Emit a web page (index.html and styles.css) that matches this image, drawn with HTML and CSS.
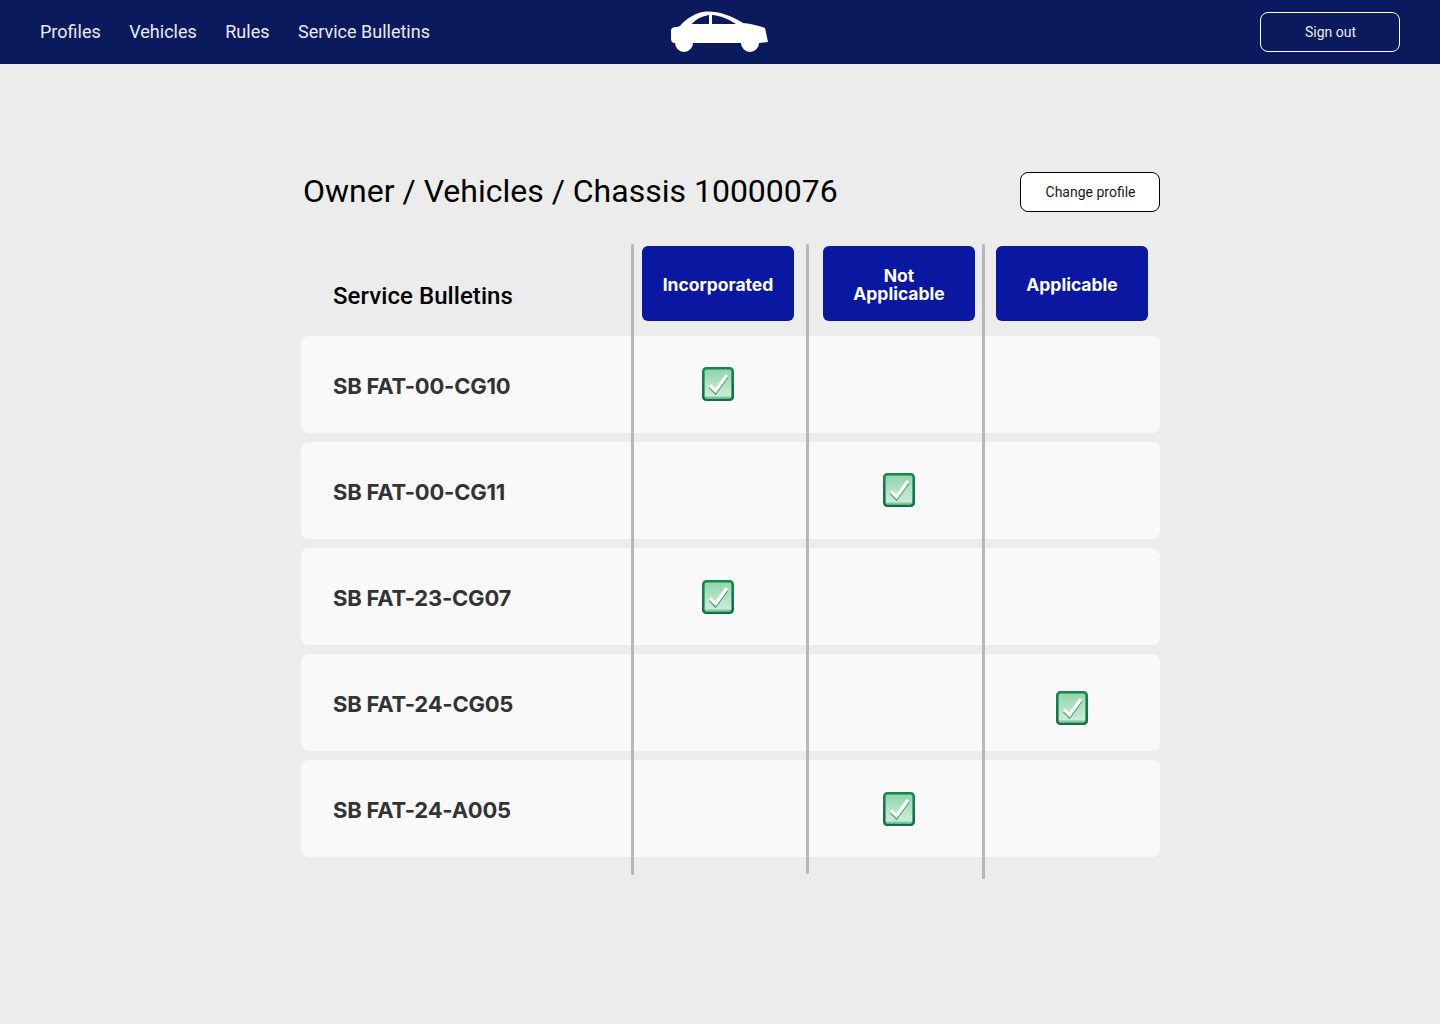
FILE: index.html
```html
<!DOCTYPE html>
<html lang="en">

<head>
  <meta charset="UTF-8">
  <meta name="viewport" content="width=device-width, initial-scale=1.0">
  <title>Service Bulletins</title>
  <link rel="stylesheet" href="styles.css">
</head>

<body>
  <svg class="defs" width="0" height="0" aria-hidden="true">
    <defs>
      <linearGradient id="check_fill" x1="0" y1="0" x2="0" y2="1">
        <stop offset="0" stop-color="#8ed4aa" />
        <stop offset="1" stop-color="#d3f0de" />
      </linearGradient>
      <linearGradient id="check_edge" x1="0" y1="0" x2="0" y2="1">
        <stop offset="0" stop-color="#1a8455" />
        <stop offset="1" stop-color="#0f6e43" />
      </linearGradient>
      <symbol id="check" viewBox="0 0 32 34">
        <rect x="1.300" y="1.300" width="29.400" height="31.400" rx="3" fill="url(#check_fill)" stroke="url(#check_edge)" stroke-width="2.600" />
        <rect x="3" y="29.500" width="26" height="1.500" fill="#7fc79c" />
        <path d="M8 18.500 L13.500 24.500 L25 8.500" fill="none" stroke="#3f9c6e" stroke-width="3.200" transform="translate(0 1.300)" />
        <path d="M8 18.500 L13.500 24 L25 8" fill="none" stroke="#fff" stroke-width="3.400" />
      </symbol>
    </defs>
  </svg>

  <nav class="topbar">
    <div class="topbar_links">
      <a href="#">Profiles</a>
      <a href="#">Vehicles</a>
      <a href="#">Rules</a>
      <a href="#">Service Bulletins</a>
    </div>

    <svg class="logo" viewBox="0 0 98 42" aria-label="Logo">
      <path fill="#fff" fill-rule="evenodd" d="M1 20 C1 17 3 16 7 16 L10 15 C16 8 26 0.500 38 0.500 C50 0.500 62 5 73 12 C82 13 90 15 95 17 L98 31 L89 32 A9 9 0 0 1 71 32 L23 32 A9 9 0 0 1 5 32 C2 32 1 30 1 27 Z M21.500 13 C26 8 32 5 39 4 L39 13 Z M42 4 C50 4.500 58 8 66 13 L42 13 Z" />
    </svg>

    <button class="btn btn_signout">Sign out</button>
  </nav>

  <main class="page">
    <div class="page_head">
      <h1>Owner / Vehicles / Chassis 10000076</h1>
      <button class="btn btn_change">Change profile</button>
    </div>

    <div class="board">
      <div class="board_head">
        <h2>Service Bulletins</h2>
        <div class="cell"><div class="status">Incorporated</div></div>
        <div class="cell"><div class="status">Not<br>Applicable</div></div>
        <div class="cell"><div class="status">Applicable</div></div>
      </div>

      <div class="row">
        <div class="row_name">SB FAT-00-CG10</div>
        <div class="cell"><svg class="tick"><use href="#check" /></svg></div>
        <div class="cell"></div>
        <div class="cell"></div>
      </div>

      <div class="row">
        <div class="row_name">SB FAT-00-CG11</div>
        <div class="cell"></div>
        <div class="cell"><svg class="tick"><use href="#check" /></svg></div>
        <div class="cell"></div>
      </div>

      <div class="row">
        <div class="row_name">SB FAT-23-CG07</div>
        <div class="cell"><svg class="tick tick_mid"><use href="#check" /></svg></div>
        <div class="cell"></div>
        <div class="cell"></div>
      </div>

      <div class="row">
        <div class="row_name">SB FAT-24-CG05</div>
        <div class="cell"></div>
        <div class="cell"></div>
        <div class="cell"><svg class="tick tick_low"><use href="#check" /></svg></div>
      </div>

      <div class="row">
        <div class="row_name">SB FAT-24-A005</div>
        <div class="cell"></div>
        <div class="cell"><svg class="tick tick_mid"><use href="#check" /></svg></div>
        <div class="cell"></div>
      </div>

      <span class="rule rule_1"></span>
      <span class="rule rule_2"></span>
      <span class="rule rule_3"></span>
    </div>
  </main>
</body>

</html>
```

FILE: styles.css
```css
* {
  box-sizing: border-box;
  margin: 0;
}

body {
  min-height: 100vh;
  background: #ececec;
  font-family: Roboto, sans-serif;
}

.defs {
  display: block;
  height: 0;
}

.topbar {
  height: 64px;
  padding: 0 40px;
  position: relative;

  display: flex;
  align-items: center;
  justify-content: space-between;

  background: #0a1a5c;
}

.topbar_links {
  display: flex;
  gap: 28.5px;
  margin-top: -2px;
}

.topbar_links a {
  font-size: 18px;
  color: #e9ebf3;
  text-decoration: none;
}

.logo {
  width: 98px;
  height: 42px;

  position: absolute;
  left: 670px;
  top: 11px;
}

.btn {
  width: 140px;
  height: 40px;
  padding-left: 7px;

  border-radius: 8px;
  font-family: Roboto, sans-serif;
  font-size: 14px;
}

.btn_signout {
  background: transparent;
  border: 1px solid #fff;
  color: #e9ebf3;
}

.btn_change {
  background: #fff;
  border: 1px solid #000;
  color: #1a1a1a;
}

.page {
  width: 859px;
  margin-left: 301px;
  padding-top: 108px;
}

.page_head {
  display: flex;
  align-items: center;
  justify-content: space-between;
  padding-left: 2px;
}

.page_head h1 {
  font-size: 32px;
  font-weight: 400;
  color: #000;
  margin-top: -2px;
}

.board {
  margin-top: 34px;
  position: relative;

  display: flex;
  flex-direction: column;
  gap: 9px;
}

.board_head,
.row {
  display: grid;
  grid-template-columns: 341px 181px 173px 164px;
  align-items: center;
}

.board_head {
  height: 75px;
  margin-bottom: 6px;
}

.board_head h2 {
  padding: 24px 0 0 32px;

  font-size: 24px;
  font-weight: 500;
  letter-spacing: 0.06px;
  color: #000;
}

.status {
  width: 152px;
  height: 75px;
  padding-top: 2px;

  display: flex;
  align-items: center;
  justify-content: center;

  border-radius: 6px;
  background: #0a17a0;

  font-family: Inter, sans-serif;
  font-size: 17.5px;
  font-weight: 700;
  line-height: 18px;
  text-align: center;
  color: #fff;
}

.row {
  height: 97px;
  border-radius: 8px;
  background: #f9f9f9;
}

.row_name {
  padding: 2px 0 0 32px;

  font-family: Inter, sans-serif;
  font-size: 22px;
  font-weight: 700;
  letter-spacing: -0.22px;
  color: #333;
}

.row .cell {
  width: 152px;
  display: flex;
  justify-content: center;
}

.tick {
  width: 32px;
  height: 34px;
  margin-top: -1px;
}

.tick_mid {
  margin-top: 1px;
}

.tick_low {
  margin-top: 10px;
}

/* column lines sit over the rows */
.rule {
  width: 3px;
  border-radius: 2px;
  background: #b7b7b7;

  position: absolute;
  top: -2px;
}

.rule_1 {
  left: 330px;
  height: 631px;
}

.rule_2 {
  left: 505px;
  height: 630px;
}

.rule_3 {
  left: 681px;
  height: 635px;
}
```
